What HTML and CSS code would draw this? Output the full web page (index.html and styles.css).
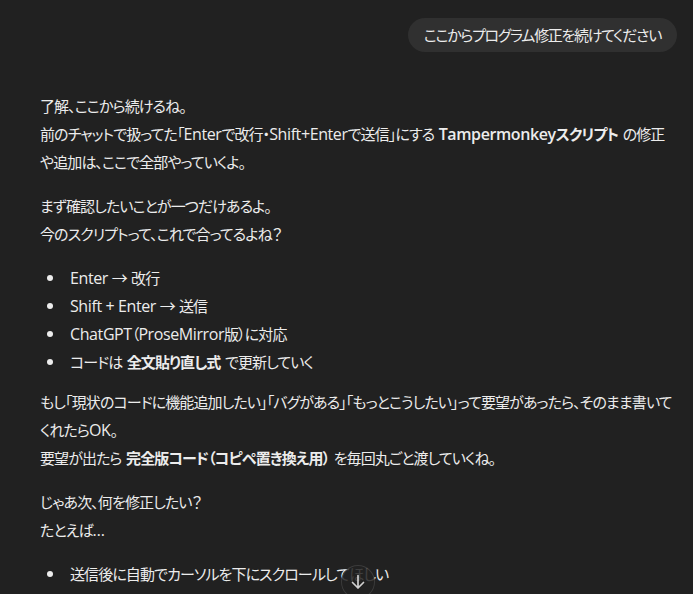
FILE: index.html
```html
<!DOCTYPE html>
<html lang="ja">
<head>
<meta charset="utf-8">
<title>Chat</title>
<link rel="stylesheet" href="styles.css">
</head>
<body>
<main class="thread">
  <div class="user-row">
    <div class="user-bubble">ここからプログラム修正を続けてください</div>
  </div>
  <div class="assistant">
    <p>了解、ここから続けるね。<br>前のチャットで扱ってた「<span class="en">Enter</span>で改行・<span class="en">Shift+Enter</span>で送信」にする <strong><span class="en">Tampermonkey</span>スクリプト</strong> の修正や追加は、ここで全部やっていくよ。</p>
    <p>まず確認したいことが一つだけあるよ。<br>今のスクリプトって、これで合ってるよね？</p>
    <ul class="bullets">
      <li><span><span class="en">Enter → </span>改行</span></li>
      <li><span><span class="en">Shift + Enter → </span>送信</span></li>
      <li><span><span class="en">ChatGPT</span>（<span class="en">ProseMirror</span>版）に対応</span></li>
      <li><span>コードは <strong>全文貼り直し式</strong> で更新していく</span></li>
    </ul>
    <p>もし「現状のコードに機能追加したい」「バグがある」「もっとこうしたい」って要望があったら、そのまま書いてくれたら<span class="en">OK</span>。<br>要望が出たら <strong>完全版コード（コピペ置き換え用）</strong> を毎回丸ごと渡していくね。</p>
    <p>じゃあ次、何を修正したい？<br>たとえば<span class="en">…</span></p>
    <ul class="bullets">
      <li><span>送信後に自動でカーソルを下にスクロールしてほしい</span></li>
      <li><span>日本語変換中の確定は送信されないようにしたい</span></li>
      <li><span>ボタンでオン・オフを切り替えたい</span></li>
    </ul>
  </div>
</main>
<button class="scroll-down" aria-label="下にスクロール">
  <svg width="20" height="20" viewBox="0 0 20 20" fill="none" stroke="currentColor" stroke-width="1.7" stroke-linecap="round" stroke-linejoin="round"><path d="M10 3.5v12.5M4.5 10.5 10 16l5.5-5.5"/></svg>
</button>
</body>
</html>
```
FILE: styles.css
```css
html, body {
  margin: 0;
  padding: 0;
  background: #212121;
}
body {
  color: #ececec;
  font-family: "Noto Sans CJK JP", "Noto Sans", sans-serif;
  font-size: 15px;
  line-height: 28px;
  letter-spacing: -0.9px;
  word-spacing: 2px;
  font-feature-settings: "palt";
}
.en {
  font-family: "Open Sans", "Noto Sans CJK JP", sans-serif;
  font-size: 16px;
  letter-spacing: -0.4px;
  word-spacing: 0;
}
.thread {
  padding: 18px 16px 40px 40px;
}
.user-row {
  display: flex;
  justify-content: flex-end;
}
.user-bubble {
  background: #303030;
  border-radius: 18px;
  padding: 6px 16px;
  line-height: 22px;
  letter-spacing: -1.3px;
}
.assistant {
  margin-top: 40px;
  padding-right: 2px;
}
.assistant p {
  margin: 0 0 16px;
}
.bullets {
  list-style: none;
  margin: 0 0 12px;
  padding: 0;
}
.bullets li {
  display: flex;
  align-items: flex-start;
}
.bullets li::before {
  content: "";
  flex: none;
  width: 6px;
  height: 6px;
  border-radius: 50%;
  background: #ececec;
  margin: 11px 17px 0 7px;
}
strong {
  font-weight: 700;
}
strong .en {
  font-weight: 600;
}
.scroll-down {
  position: fixed;
  left: 341px;
  top: 565px;
  width: 34px;
  height: 34px;
  padding: 0;
  border-radius: 50%;
  border: 1px solid rgba(255,255,255,0.12);
  background: rgba(33,33,33,0.85);
  color: #d0d0d0;
  display: flex;
  align-items: center;
  justify-content: center;
}
```
